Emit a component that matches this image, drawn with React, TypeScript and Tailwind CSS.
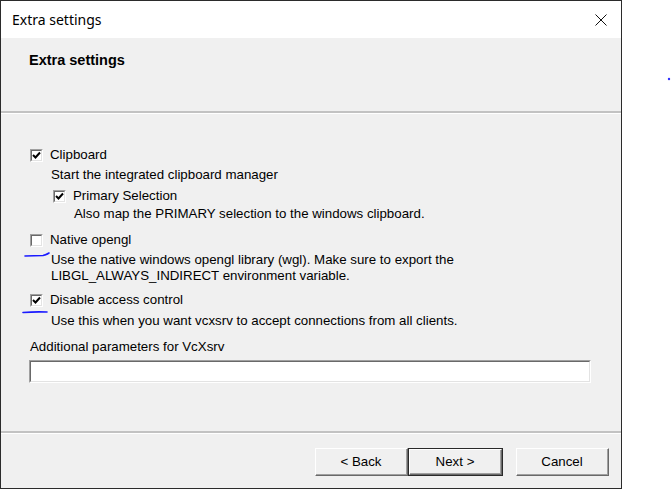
import React from "react";

const body = { fontFamily: '"Liberation Sans", Arial, sans-serif' };

function CheckBox({ checked }: { checked: boolean }) {
  return (
    <div className="w-[13px] h-[13px] shrink-0 border-t border-l border-t-[#a0a0a0] border-l-[#a0a0a0] border-b border-r border-b-white border-r-white">
      <div className="w-full h-full bg-white border-t border-l border-t-[#696969] border-l-[#696969] border-b border-r border-b-[#e3e3e3] border-r-[#e3e3e3] flex items-center justify-center">
        {checked && (
          <svg width="9" height="9" viewBox="0 0 9 9">
            <path d="M1 4 L3.5 6.5 L8 1.5" fill="none" stroke="#000" strokeWidth="2" />
          </svg>
        )}
      </div>
    </div>
  );
}

function Option({ checked, label, indent }: { checked: boolean; label: string; indent?: boolean }) {
  return (
    <div className={`flex items-center h-4 gap-[7px] ${indent ? "ml-[52px]" : "ml-[29px]"}`}>
      <CheckBox checked={checked} />
      <span className="leading-4">{label}</span>
    </div>
  );
}

function WinButton({ label, isDefault }: { label: string; isDefault?: boolean }) {
  return (
    <div className={`h-[28px] ${isDefault ? "w-[95px] border border-[#2a2a2a]" : "w-[93px]"}`}>
      <div className="w-full h-full bg-[#f0f0f0] border-t border-l border-t-white border-l-white border-b border-r border-b-[#696969] border-r-[#696969]">
        <div className="w-full h-full flex items-center justify-center border-b border-r border-b-[#a0a0a0] border-r-[#a0a0a0] text-[13.3px]">
          {label}
        </div>
      </div>
    </div>
  );
}

function Separator() {
  return (
    <div>
      <div className="h-[2px] bg-[#c2c2c2]" />
      <div className="h-px bg-white" />
    </div>
  );
}

export default function App() {
  return (
    <div className="relative w-[671px] h-[490px] bg-white flex overflow-hidden text-black" style={body}>
      <div className="w-[622px] h-[489px] border border-[#2b2b2b] bg-[#f0f0f0] flex flex-col">
        {/* title bar */}
        <div className="h-[37px] bg-white flex items-center justify-between pl-[11px] pr-[14px] shrink-0">
          <span className="text-[14px]" style={{ fontFamily: '"Noto Sans", "Liberation Sans", sans-serif' }}>
            Extra settings
          </span>
          <svg width="12" height="12" viewBox="0 0 12 12">
            <path d="M0.5 0.5 L11.5 11.5 M11.5 0.5 L0.5 11.5" stroke="#111" strokeWidth="1" />
          </svg>
        </div>

        {/* header */}
        <div className="h-[73px] shrink-0 pl-[28px] pt-[14px]">
          <div className="font-bold text-[14.5px] leading-4">Extra settings</div>
        </div>
        <Separator />

        {/* content */}
        <div className="flex-1 text-[13.3px] leading-4">
          <div className="mt-[33px]">
            <Option checked label="Clipboard" />
          </div>
          <div className="ml-[50px] mt-[4px]">Start the integrated clipboard manager</div>
          <div className="mt-[5px]">
            <Option checked indent label="Primary Selection" />
          </div>
          <div className="ml-[73px] mt-[2px]">Also map the PRIMARY selection to the windows clipboard.</div>

          <div className="mt-[10px]">
            <Option checked={false} label="Native opengl" />
          </div>
          <div className="ml-[50px] mt-[4px]">
            <div>Use the native windows opengl library (wgl). Make sure to export the</div>
            <div>LIBGL_ALWAYS_INDIRECT environment variable.</div>
          </div>

          <div className="mt-[8px]">
            <Option checked label="Disable access control" />
          </div>
          <div className="ml-[50px] mt-[5px]">Use this when you want vcxsrv to accept connections from all clients.</div>

          <div className="ml-[29px] mt-[10px]">Additional parameters for VcXsrv</div>
          <div className="ml-[28px] mt-[5px] w-[562px] h-[23px] border-t border-l border-t-[#a0a0a0] border-l-[#a0a0a0] border-b border-r border-b-white border-r-white">
            <div className="w-full h-full bg-white border-t border-l border-t-[#696969] border-l-[#696969] border-b border-r border-b-[#e3e3e3] border-r-[#e3e3e3]" />
          </div>
        </div>

        <Separator />
        {/* buttons */}
        <div className="h-[54px] shrink-0 flex items-start pt-[14px] pl-[314px]">
          <WinButton label="< Back" />
          <WinButton label="Next >" isDefault />
          <div className="ml-[13px]">
            <WinButton label="Cancel" />
          </div>
        </div>
      </div>

      {/* annotation strokes */}
      <svg className="absolute inset-0 pointer-events-none" width="671" height="490" viewBox="0 0 671 490">
        <path d="M25 256 L43 255.5 Q46 255 49 253" fill="none" stroke="#1a1aff" strokeWidth="1.6" strokeLinecap="round" />
        <path d="M23 312.5 Q35 311.5 47 312" fill="none" stroke="#1a1aff" strokeWidth="1.6" strokeLinecap="round" />
        <circle cx="669" cy="79" r="1.2" fill="#3030ff" />
      </svg>
    </div>
  );
}
